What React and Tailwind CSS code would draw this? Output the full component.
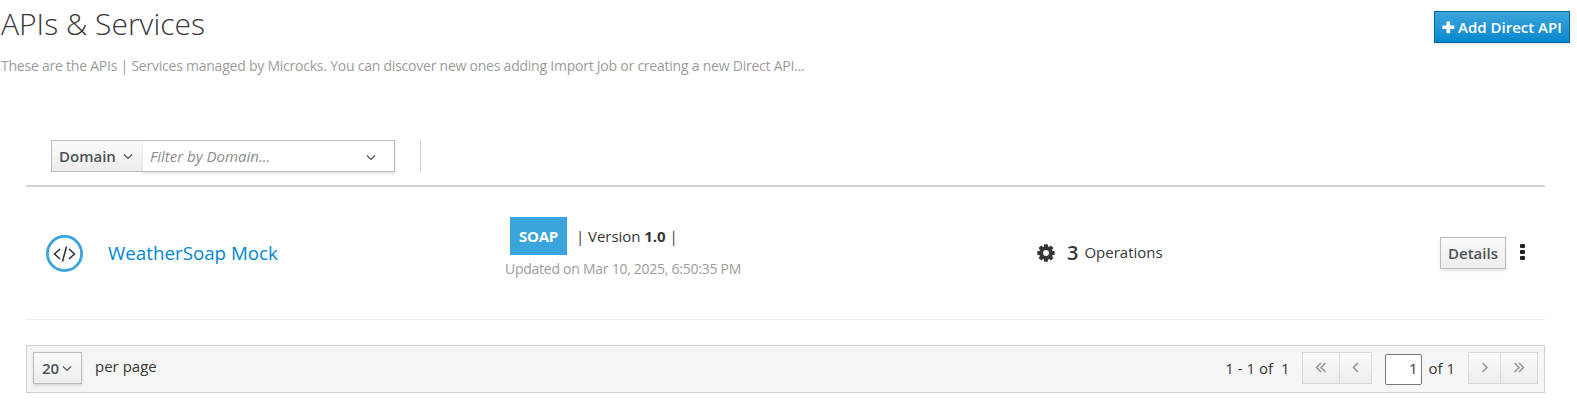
import React from "react";

function Chevron({ dir = "down", double = false, className = "" }) {
  const d = {
    down: "M1 1.5 L5 5.5 L9 1.5",
    left: "M6 1 L1.5 5.5 L6 10",
    right: "M1.5 1 L6 5.5 L1.5 10",
  }[dir];
  const box = dir === "down" ? [10, 7] : [double ? 12 : 8, 11];
  return (
    <svg width={box[0]} height={box[1]} viewBox={`0 0 ${box[0]} ${box[1]}`} fill="none" stroke="currentColor" strokeWidth={dir === "down" ? 1.2 : 1.7} className={`shrink-0 ${className}`}>
      <path d={d} />
      {double && <path d={d} transform="translate(4.5 0)" />}
    </svg>
  );
}

function Gear() {
  return (
    <svg width="18" height="18" viewBox="-9 -9 18 18" fill="#363636" className="shrink-0">
      {[0, 45, 90, 135].map((a) => (
        <path key={a} d="M-2.2 -6 L-1.8 -8.7 H1.8 L2.2 -6 V6 L1.8 8.7 H-1.8 L-2.2 6 Z" transform={`rotate(${a})`} />
      ))}
      <circle r="6.8" />
      <circle r="2.9" fill="#fff" />
    </svg>
  );
}

function Header() {
  return (
    <header className="flex h-[140px] items-start justify-between pr-[7px] pl-[1px]">
      <div>
        <h1 className="h-[54px] text-[30px] leading-[47px] font-light whitespace-nowrap text-[#363636]">APIs &amp; Services</h1>
        <p className="text-[14px] leading-[23px] tracking-[-0.23px] whitespace-nowrap text-[#9c9c9c]">
          These are the APIs | Services managed by Microcks. You can discover new ones adding Import Job or creating a new Direct API...
        </p>
      </div>
      <button className="mt-[11px] flex h-8 w-[136px] items-center gap-[3px] border border-[#00659c] bg-linear-to-b from-[#39a5dc] to-[#0088ce] pl-[7px] text-[15px] font-semibold whitespace-nowrap text-white shadow-[0_2px_3px_rgba(3,3,3,0.1)]">
        <svg width="13" height="13" viewBox="0 0 13 13" className="shrink-0">
          <path d="M4.5 0.5h3.6v4.1H12.3v3.5H8.1V12.2H4.5V8.1H0.3V4.6h4.2z" fill="#fff" />
        </svg>
        Add Direct API
      </button>
    </header>
  );
}

function Toolbar() {
  return (
    <div className="mx-[26px] flex h-[47px] w-[1519px] border-b-2 border-[#d1d1d1] pl-[25px]">
      <button className="flex h-8 w-[92px] items-center border border-r-0 border-[#bbb] bg-linear-to-b from-[#fafafa] to-[#ededed] pl-[7px] text-[15px] font-semibold text-[#4d5258]">
        Domain
        <Chevron className="ml-[7px]" />
      </button>
      <div className="flex h-8 w-[252px] items-center justify-between border border-l-0 border-[#bbb] bg-white pr-[18px] pl-[7px] text-[15px] text-[#8b8d8f] italic shadow-[0_2px_3px_rgba(3,3,3,0.1)]">
        Filter by Domain...
        <Chevron className="mt-[3px] text-[#4d5258]" />
      </div>
      <div className="ml-[25px] h-[33px] w-px bg-[#d1d1d1]" />
    </div>
  );
}

function ServiceRow() {
  return (
    <div className="mx-[26px] flex h-[133px] w-[1519px] border-b border-[#ededed] text-[15px] text-[#363636]">
      <div className="flex w-[479px] items-center pl-5">
        <svg width="37" height="37" viewBox="0 0 37 37" fill="none" className="shrink-0">
          <circle cx="18.5" cy="18.5" r="17.1" stroke="#39a5dc" strokeWidth="2.8" />
          <path d="M14 14 L8.5 19 L14 24 M23 14 L28.5 19 L23 24 M20.5 11.5 L16.5 26.5" stroke="#292e34" strokeWidth="1.5" />
        </svg>
        <a className="ml-[25px] text-[18.75px] leading-7 whitespace-nowrap text-[#0088ce]">WeatherSoap Mock</a>
      </div>
      <div className="w-[532px] pt-[30px]">
        <div className="flex items-center whitespace-nowrap">
          <span className="ml-[5px] flex h-[38px] w-[57px] items-center justify-center bg-[#39a5dc] text-[15px] font-bold tracking-[-0.2px] text-white">SOAP</span>
          <span className="ml-[9px] tracking-[-0.04px]">| Version <b className="font-bold">1.0</b> |</span>
        </div>
        <p className="mt-[3px] text-[14px] leading-[22px] tracking-[-0.26px] whitespace-nowrap text-[#9c9c9c]">Updated on Mar 10, 2025, 6:50:35 PM</p>
      </div>
      <div className="flex flex-1 items-center">
        <Gear />
        <b className="ml-3 text-[20px] leading-6 font-semibold">3</b>
        <span className="mb-[2px] ml-[6px]">Operations</span>
      </div>
      <div className="flex items-center pr-5">
        <button className="flex h-8 w-[66px] items-center justify-center border border-[#bbb] bg-linear-to-b from-[#fafafa] to-[#ededed] font-semibold text-[#4d5258] shadow-[0_2px_3px_rgba(3,3,3,0.1)]">Details</button>
        <svg width="5" height="16" viewBox="0 0 5 16" fill="#222" className="mb-[2px] ml-[14px]">
          <rect width="5" height="4" rx="1" />
          <rect y="6" width="5" height="4" rx="1" />
          <rect y="12" width="5" height="4" rx="1" />
        </svg>
      </div>
    </div>
  );
}

function Pager() {
  const cell = "flex items-center justify-center pb-[2px]";
  const group = "flex h-8 border border-[#d9d9d9] bg-linear-to-b from-[#fafafa] to-[#ededed] text-[#999]";
  return (
    <div className="mx-[26px] mt-[25px] flex h-12 w-[1519px] border border-[#d1d1d1] bg-[#f5f5f5] pt-[6px] pr-[6px] pl-[6px] text-[15px] text-[#363636]">
      <button className="flex h-8 w-[49px] items-center border border-[#bbb] bg-linear-to-b from-[#fafafa] to-[#ededed] pl-2 font-semibold text-[#4d5258] shadow-[0_2px_3px_rgba(3,3,3,0.1)]">
        20
        <Chevron className="ml-[3px]" />
      </button>
      <span className="ml-[13px] leading-[29px]">per page</span>
      <div className="ml-auto flex items-start whitespace-nowrap">
        <span className="leading-[33px]">1 - 1 of&nbsp; 1</span>
        <div className={`${group} ml-[13px] w-[70px]`}>
          <span className={`${cell} w-[37px] border-r border-[#d9d9d9]`}><Chevron dir="left" double /></span>
          <span className={`${cell} flex-1`}><Chevron dir="left" /></span>
        </div>
        <div className="mt-[2px] ml-[13px] h-[31px] w-[37px] rounded-[2px] border border-[#767676] bg-white pr-1 text-right leading-[26px]">1</div>
        <span className="ml-[6px] leading-[33px]">of 1</span>
        <div className={`${group} ml-[13px] w-[70px]`}>
          <span className={`${cell} w-[32px] border-r border-[#d9d9d9]`}><Chevron dir="right" /></span>
          <span className={`${cell} flex-1`}><Chevron dir="right" double /></span>
        </div>
      </div>
    </div>
  );
}

export default function App() {
  return (
    <main className="h-[406px] w-[1577px] overflow-hidden bg-white font-['Open_Sans',sans-serif]">
      <Header />
      <Toolbar />
      <ServiceRow />
      <Pager />
    </main>
  );
}
